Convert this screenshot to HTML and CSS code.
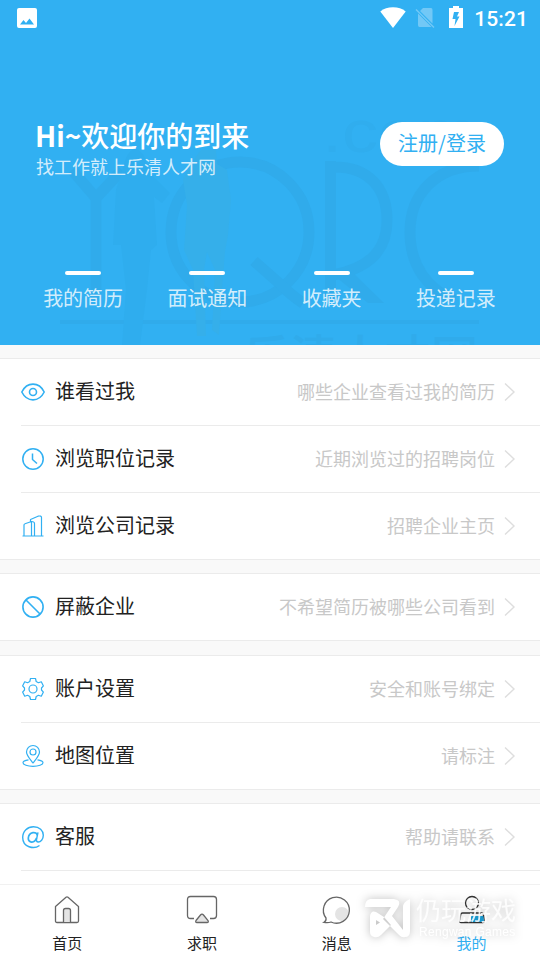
FILE: index.html
```html
<!DOCTYPE html>
<html lang="zh-CN">
<head>
    <meta charset="UTF-8">
    <meta name="viewport" content="width=device-width, initial-scale=1.0">
    <title>我的</title>
    <link rel="stylesheet" href="styles.css">
</head>
<body>
    <div class="app">

        <header class="hero">
            <!-- 背景 logo -->
            <svg class="hero-bg" viewBox="0 0 540 345" fill="none">
                <g stroke="#30abeb" stroke-width="11">
                    <path d="M72 170L96 198L122 170M96 196V300"/>
                    <ellipse cx="240" cy="232" rx="69" ry="70"/>
                    <path d="M254 261L280 284Q292 296 303 303"/>
                    <path d="M330.500 161V300M330 167C370 165 387 190 387 220C387 250 370 268 333 275"/>
                    <path d="M479 166C435 166 410 195 410 232C410 266 428 290 455 300"/>
                </g>
                <path d="M336 277L352 272L384 303H368Z" fill="#30abeb"/>
                <path d="M60 322H479" stroke="#30abeb" stroke-width="4"/>
                <path d="M126 158Q135 140 145 158L150 173L170 193L162 203L154 197L157 245L151 250L147 290L140 345H122L126 290L121 245H113L116 190Z" fill="#2fadee"/>
                <path d="M201 150H216L217 164L227 170L231 200L228 235L225 252L222 290L219 335L212 330L215 270L207 252L204 270L206 336L197 336L193 270L184 250L187 205L183 180L190 165Z" fill="#35afea"/>
                <text x="322" y="152" font-size="60" textLength="156" lengthAdjust="spacingAndGlyphs" class="bg-com">.com</text>
                <text x="243" y="374" font-size="47" class="bg-name">乐清人才网</text>
            </svg>

            <div class="status-bar">
                <svg width="20" height="20" viewBox="0 0 20 20"><path fill="#fff" fill-rule="evenodd" d="M2 0H18Q20 0 20 2V18Q20 20 18 20H2Q0 20 0 18V2Q0 0 2 0ZM3 16.500H17L12.500 10.500L9 15L6.500 12Z"/></svg>
                <div class="status-right">
                    <svg class="wifi" width="26" height="21" viewBox="0 0 26 21"><path fill="#fff" d="M13 21L.3 4.500Q5.500 .3 13 .3T25.700 4.500Z"/></svg>
                    <svg class="sim" width="20" height="22" viewBox="0 0 20 22"><path fill="#72c8f6" d="M8 1H16Q17.500 1 17.500 3V16.500L5 4ZM3 6.500L16.500 20H4.500Q3 20 3 18Z"/><path d="M1 2.500L19 20.500" stroke="#72c8f6" stroke-width="1.500"/></svg>
                    <svg class="battery" width="14" height="22" viewBox="0 0 14 22"><path fill="#fff" fill-rule="evenodd" d="M4 0H10V2H14V22H0V2H4ZM5 6L3.500 13H6.500L5.500 20L10.500 10.500H8L10 6Z"/></svg>
                    <span class="time">15:21</span>
                </div>
            </div>

            <div class="welcome">
                <div>
                    <h1><b>Hi~</b>欢迎你的到来</h1>
                    <p>找工作就上乐清人才网</p>
                </div>
                <a class="login-btn">注册/登录</a>
            </div>

            <div class="stats">
                <div class="stat"><i></i><span>我的简历</span></div>
                <div class="stat"><i></i><span>面试通知</span></div>
                <div class="stat"><i></i><span>收藏夹</span></div>
                <div class="stat"><i></i><span>投递记录</span></div>
            </div>
        </header>

        <main>
            <section class="group">
                <a class="row">
                    <svg class="icon" viewBox="0 0 24 24"><path d="M.8 12C6 1.500 18 1.500 23.200 12C18 22.500 6 22.500 .8 12Z" stroke-width="1.600"/><circle cx="12" cy="12" r="3.500" stroke-width="1.600"/></svg>
                    <span class="name">谁看过我</span>
                    <span class="tip">哪些企业查看过我的简历</span>
                    <svg class="arrow" viewBox="0 0 12 20"><path d="M1 1.500L10 10L1 18.500"/></svg>
                </a>
                <a class="row">
                    <svg class="icon" viewBox="0 0 24 24"><circle cx="12" cy="12" r="10.200" stroke-width="1.500"/><path d="M11.500 6.500V12.500L16 16.500" stroke-width="1.500"/></svg>
                    <span class="name">浏览职位记录</span>
                    <span class="tip">近期浏览过的招聘岗位</span>
                    <svg class="arrow" viewBox="0 0 12 20"><path d="M1 1.500L10 10L1 18.500"/></svg>
                </a>
                <a class="row">
                    <svg class="icon" viewBox="0 0 24 24"><path d="M1.500 22H22.500M3 22V11Q3 10 4 9.700L10.500 7.500Q13.500 7.500 13.500 9.500V22M10.500 8V22M9.500 7.500V5.500L17 2.200Q20.500 1.500 20.500 3.500V22"/></svg>
                    <span class="name">浏览公司记录</span>
                    <span class="tip">招聘企业主页</span>
                    <svg class="arrow" viewBox="0 0 12 20"><path d="M1 1.500L10 10L1 18.500"/></svg>
                </a>
            </section>

            <section class="group group-single">
                <a class="row">
                    <svg class="icon" viewBox="0 0 24 24"><circle cx="12" cy="12" r="10.100" stroke-width="1.600"/><path d="M5 5L19 19" stroke-width="1.600"/></svg>
                    <span class="name">屏蔽企业</span>
                    <span class="tip">不希望简历被哪些公司看到</span>
                    <svg class="arrow" viewBox="0 0 12 20"><path d="M1 1.500L10 10L1 18.500"/></svg>
                </a>
            </section>

            <section class="group">
                <a class="row">
                    <svg class="icon" viewBox="0 0 24 24"><path d="M9.500 1.500H14.500L15.200 4.500L17.400 5.700L20.300 4.800L22.400 8.900L20.500 11V13L22.400 15.100L20.300 19.200L17.400 18.300L15.200 19.500L14.500 22.500H9.500L8.800 19.500L6.600 18.300L3.700 19.200L1.600 15.100L3.500 13V11L1.600 8.900L3.700 4.800L6.600 5.700L8.800 4.500Z"/><circle cx="12" cy="12" r="4"/></svg>
                    <span class="name">账户设置</span>
                    <span class="tip">安全和账号绑定</span>
                    <svg class="arrow" viewBox="0 0 12 20"><path d="M1 1.500L10 10L1 18.500"/></svg>
                </a>
                <a class="row">
                    <svg class="icon" viewBox="0 0 24 24"><path d="M12 19C9 15 5.500 11.500 5.500 8A6.500 6.500 0 0 1 18.500 8C18.500 11.500 15 15 12 19Z"/><circle cx="12" cy="8" r="3"/><path d="M7.500 15.800C4 16.300 2 17.400 2 18.800C2 20.800 6.500 22.300 12 22.300S22 20.800 22 18.800C22 17.400 20 16.300 16.500 15.800"/></svg>
                    <span class="name">地图位置</span>
                    <span class="tip">请标注</span>
                    <svg class="arrow" viewBox="0 0 12 20"><path d="M1 1.500L10 10L1 18.500"/></svg>
                </a>
            </section>

            <section class="group">
                <a class="row">
                    <svg class="icon" viewBox="0 0 24 24"><path d="M18.500 20.500C13 24.500 1.700 22.500 1.700 12.500C1.700 6 6.500 1.800 12.500 1.800C18.500 1.800 22.300 5.500 22.300 10.300C22.300 14.500 19.500 17 17.300 17C15.500 17 15.300 15.600 15.600 14L17 7.300" stroke-width="1.400"/><path d="M16.300 10.500C15.800 6 8 6.500 7.300 13C6.900 17.800 13.500 19 15.500 13" stroke-width="1.700"/></svg>
                    <span class="name">客服</span>
                    <span class="tip">帮助请联系</span>
                    <svg class="arrow" viewBox="0 0 12 20"><path d="M1 1.500L10 10L1 18.500"/></svg>
                </a>
                <div class="row"></div>
            </section>
        </main>

        <nav class="tab-bar">
            <a class="tab">
                <svg viewBox="0 0 32 32"><path d="M4.500 12.500L15 3.200Q16 2.400 17 3.200L27.500 12.500V27Q27.500 28.500 26 28.500H6Q4.500 28.500 4.500 27Z"/><path d="M12.500 28V16.500Q12.500 14.500 14.500 14.500H17.500Q19.500 14.500 19.500 16.500V28" fill="#e4e4e4"/></svg>
                <span>首页</span>
            </a>
            <a class="tab">
                <svg viewBox="0 0 32 32"><path d="M8 24.500H4.500Q1.500 24.500 1.500 21.500V5.500Q1.500 2.500 4.500 2.500H27.500Q30.500 2.500 30.500 5.500V21.500Q30.500 24.500 27.500 24.500H24"/><path d="M10 26.500L14.500 21Q16 19.300 17.500 21L22 26.500Q23 28.500 21 28.500H11Q9 28.500 10 26.500Z" fill="#e4e4e4"/></svg>
                <span>求职</span>
            </a>
            <a class="tab">
                <svg viewBox="0 0 32 32"><circle cx="21" cy="20" r="7" fill="#e4e4e4" stroke="none"/><path d="M5 24A13 13 0 1 1 10 28Q7 29 3 28.300Q5.500 27 5 24Z"/></svg>
                <span>消息</span>
            </a>
            <a class="tab active">
                <svg viewBox="0 0 32 32"><circle cx="16" cy="9" r="6.500"/><path d="M6.500 19H25.500Q27 19 27.300 20.500L28.500 27Q28.500 28.500 27 28.500H5Q3.500 28.500 3.700 27L4.700 20.500Q5 19 6.500 19Z"/><path d="M15 22H27.300L28.200 28H15Z" fill="#1ca3dc" stroke="none"/></svg>
                <span>我的</span>
            </a>
        </nav>

        <!-- 右下角水印 -->
        <div class="watermark">
            <svg width="46" height="40" viewBox="0 0 46 40"><path fill="#fff" fill-rule="evenodd" d="M5 0H29Q37 1 33 8L27 17L38 31V8Q38 3 45 0V32Q45 38 40 38Q37 39 34 36L18 20L26 8H0Q0 1 5 0ZM5 17Q6 11 11 13L19 18L26 26L16 36Q13 39 9 38Q5 37 5 33ZM11 21V26L15 23.500Z"/></svg>
            <div class="watermark-text">
                <b>仍玩游戏</b>
                <span>Rengwan Games</span>
            </div>
        </div>
    </div>
</body>
</html>
```

FILE: styles.css
```css
/* 全局 */
* {
    box-sizing: border-box;
}

body {
    margin: 0;
    font-family: 'Noto Sans CJK SC', sans-serif;
    background: #f9f9f9;
    color: #222;
}

.app {
    position: relative;
    display: flex;
    flex-direction: column;
    width: 540px;
    height: 960px;
    overflow: hidden;
}

/* 顶部 */
.hero {
    position: relative;
    flex: none;
    height: 345px;
    background: #31b0f2;
    color: #fff;
    overflow: hidden;
}

.hero-bg {
    position: absolute;
    top: 0;
    left: 0;
    width: 540px;
    height: 345px;
}

.bg-com {
    font-family: 'Liberation Sans', sans-serif;
    fill: #30adee;
}

.bg-name {
    font-weight: 500;
    fill: #30abeb;
}

.status-bar {
    position: relative;
    display: flex;
    justify-content: space-between;
    align-items: center;
    height: 36px;
    padding: 0 12px 0 17px;
}

.status-right {
    display: flex;
    align-items: center;
}

.wifi {
    margin-bottom: 1px;
}

.sim {
    margin-left: 9px;
}

.battery {
    margin: 0 11px 2px 14px;
}

.time {
    font: 500 21px/24px Roboto, sans-serif;
    letter-spacing: 0.1px;
    padding-top: 2px;
}

.welcome {
    position: relative;
    display: flex;
    justify-content: space-between;
    margin-top: 80px;
    padding: 0 36px;
}

.welcome h1 {
    margin: 0 0 0 -1px;
    font-size: 28px;
    line-height: 38px;
    font-weight: 500;
}

.welcome h1 b {
    font-weight: 700;
}

.welcome p {
    margin: 0;
    font-size: 18px;
    line-height: 25px;
    color: rgba(255, 255, 255, 0.8);
}

.login-btn {
    width: 124px;
    height: 44px;
    margin-top: 6px;
    border-radius: 22px;
    background: #fff;
    color: #31b0f2;
    font-size: 20px;
    line-height: 42px;
    text-align: center;
}

.stats {
    position: relative;
    display: flex;
    margin-top: 92px;
    padding: 0 22px 0 21px;
}

.stat {
    flex: 1;
    display: flex;
    flex-direction: column;
    align-items: center;
    font-size: 20px;
    line-height: 28px;
    color: rgba(255, 255, 255, 0.8);
}

.stat i {
    width: 36px;
    height: 4px;
    margin-bottom: 9px;
    border-radius: 2px;
    background: #fff;
}

/* 菜单列表 */
main {
    flex: 1;
    min-height: 0;
    overflow: hidden;
    padding-top: 13px;
}

.group {
    margin-bottom: 13px;
    border-top: 1px solid #ebebeb;
    border-bottom: 1px solid #ebebeb;
    background: #fff;
}

.group-single {
    margin-bottom: 14px;
}

.row {
    display: flex;
    align-items: center;
    height: 66px;
    margin-left: 21px;
    padding-right: 24px;
}

.row + .row {
    height: 67px;
    border-top: 1px solid #ebebeb;
}

.icon {
    width: 24px;
    height: 24px;
    fill: none;
    stroke: #31b0f2;
    stroke-width: 1.2;
    stroke-linejoin: round;
}

.name {
    margin: 0 0 2px 10px;
    font-size: 20px;
    line-height: 28px;
}

.tip {
    margin: 0 0 2px auto;
    font-size: 18px;
    line-height: 26px;
    color: #c8c8c8;
}

.arrow {
    width: 12px;
    height: 20px;
    margin-left: 9px;
    fill: none;
    stroke: #dedede;
    stroke-width: 1.4;
}

/* 底部导航 */
.tab-bar {
    flex: none;
    display: flex;
    height: 76px;
    padding-right: 1px;
    border-top: 1px solid #f1f1f1;
    background: #fff;
}

.tab {
    flex: 1;
    display: flex;
    flex-direction: column;
    align-items: center;
    padding-top: 9px;
    font-size: 15px;
    line-height: 22px;
}

.tab svg {
    width: 32px;
    height: 32px;
    margin-bottom: 6px;
    fill: none;
    stroke: #666;
    stroke-width: 1.3;
}

.tab.active {
    color: #31b0f2;
}

.tab.active svg {
    stroke: #333;
}

/* 水印 */
.watermark {
    position: absolute;
    left: 365px;
    top: 893px;
    display: flex;
    color: #fff;
    filter: drop-shadow(0 0 5px rgba(0, 0, 0, 0.25));
}

.watermark svg {
    margin-top: 6px;
}

.watermark-text {
    display: flex;
    flex-direction: column;
    margin-left: 5px;
}

.watermark b {
    font-size: 25px;
    line-height: 32px;
    font-weight: 400;
    color: rgba(255, 255, 255, 0.85);
}

.watermark span {
    margin-left: 3px;
    font: 12px/14px 'Liberation Sans', sans-serif;
    letter-spacing: 0.3px;
}
```
